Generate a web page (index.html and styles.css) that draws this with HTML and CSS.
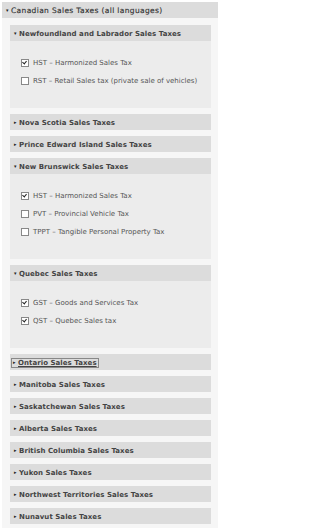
FILE: index.html
```html
<!DOCTYPE html>
<html>
<head>
<meta charset="utf-8">
<link rel="stylesheet" href="styles.css">
</head>
<body>
<div class="outer">
  <div class="ohdr"><span class="tri">▾</span>Canadian Sales Taxes (all languages)</div>
  <div class="obody">
    <div class="sec open">
      <div class="hdr"><span class="tri">▾</span>Newfoundland and Labrador Sales Taxes</div>
      <div class="body">
        <div class="row"><span class="cb on"></span>HST – Harmonized Sales Tax</div>
        <div class="row"><span class="cb"></span>RST – Retail Sales tax (private sale of vehicles)</div>
      </div>
    </div>
    <div class="sec"><div class="hdr"><span class="tri">▸</span>Nova Scotia Sales Taxes</div></div>
    <div class="sec"><div class="hdr"><span class="tri">▸</span>Prince Edward Island Sales Taxes</div></div>
    <div class="sec open">
      <div class="hdr"><span class="tri">▾</span>New Brunswick Sales Taxes</div>
      <div class="body">
        <div class="row"><span class="cb on"></span>HST – Harmonized Sales Tax</div>
        <div class="row"><span class="cb"></span>PVT – Provincial Vehicle Tax</div>
        <div class="row"><span class="cb"></span>TPPT – Tangible Personal Property Tax</div>
      </div>
    </div>
    <div class="sec open">
      <div class="hdr"><span class="tri">▾</span>Quebec Sales Taxes</div>
      <div class="body">
        <div class="row"><span class="cb on"></span>GST – Goods and Services Tax</div>
        <div class="row"><span class="cb on"></span>QST – Quebec Sales tax</div>
      </div>
    </div>
    <div class="sec"><div class="hdr"><span class="focus"><span class="tri">▸</span><u>Ontario Sales Taxes</u></span></div></div>
    <div class="sec"><div class="hdr"><span class="tri">▸</span>Manitoba Sales Taxes</div></div>
    <div class="sec"><div class="hdr"><span class="tri">▸</span>Saskatchewan Sales Taxes</div></div>
    <div class="sec"><div class="hdr"><span class="tri">▸</span>Alberta Sales Taxes</div></div>
    <div class="sec"><div class="hdr"><span class="tri">▸</span>British Columbia Sales Taxes</div></div>
    <div class="sec"><div class="hdr"><span class="tri">▸</span>Yukon Sales Taxes</div></div>
    <div class="sec"><div class="hdr"><span class="tri">▸</span>Northwest Territories Sales Taxes</div></div>
    <div class="sec"><div class="hdr"><span class="tri">▸</span>Nunavut Sales Taxes</div></div>
  </div>
</div>
</body>
</html>
```
FILE: styles.css
```css
html, body { margin: 0; padding: 0; background: #ffffff; }
body { font-family: "DejaVu Sans", Verdana, sans-serif; width: 220px; }
.outer { margin: 2px 2px 0 2px; background: #f6f6f6; }
.ohdr {
  height: 16px; line-height: 16px; background: #dcdcdc;
  font-size: 7.5px; font-weight: normal; color: #333; padding-left: 4px;
  letter-spacing: 0.35px; -webkit-text-stroke: 0.15px #333;
}
.obody { padding: 7px 7px 2px 8px; }
.sec { margin-bottom: 6px; }
.hdr {
  height: 16px; line-height: 16px; background: #dcdcdc;
  font-size: 7px; font-weight: bold; color: #444; padding-left: 4px;
  letter-spacing: 0.05px;
}
.tri { font-size: 5px; display: inline-block; width: 4px; margin-right: 1px; vertical-align: 1px; color: #222; letter-spacing: 0; -webkit-text-stroke: 0; }
.body { background: #ececec; padding: 13px 0 18px 11px; }
.row { height: 18px; display: flex; align-items: center; font-size: 7px; color: #555; white-space: nowrap; }
.cb {
  width: 6px; height: 6px; border: 1px solid #888; background: #fff;
  margin-right: 4px; position: relative; flex: none;
}
.cb.on::after {
  content: ""; position: absolute; left: 1px; top: 0px; width: 2px; height: 3px;
  border: solid #222; border-width: 0 1px 1px 0; transform: rotate(40deg);
}
.focus { border: 1px solid #888; padding: 0 1px; margin-left: -3px; }
u { text-decoration: underline; }
```
